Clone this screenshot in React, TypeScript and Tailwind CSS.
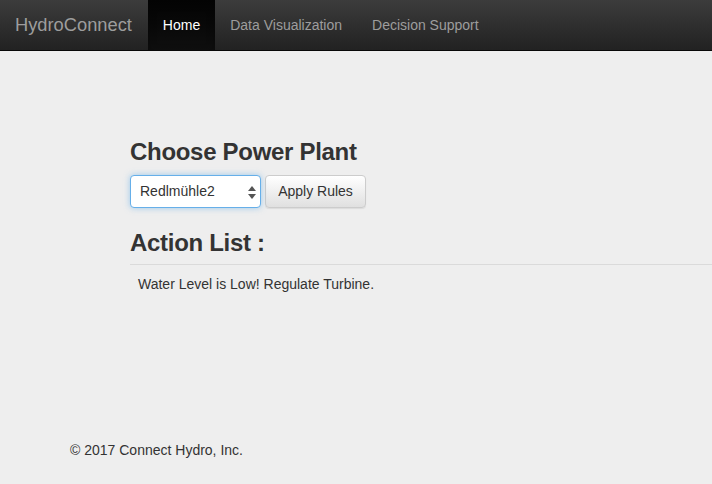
import React from 'react';

const NavLink: React.FC<{ label: string; active?: boolean }> = ({ label, active }) => (
  <a
    className={
      active
        ? 'flex items-center h-full px-[15px] text-white bg-gradient-to-b from-[#040404] to-[#0f0f0f] shadow-[inset_0_3px_9px_rgba(0,0,0,0.25)]'
        : 'flex items-center h-full px-[15px] text-[#9d9d9d]'
    }
  >
    {label}
  </a>
);

export default function App() {
  return (
    <div className="min-h-[484px] bg-[#eeeeee] text-[#333] font-['Liberation_Sans',Arial,sans-serif] text-[14px] flex flex-col">
      <nav className="h-[51px] flex items-stretch bg-gradient-to-b from-[#3c3c3c] to-[#222222] border-b border-[#080808]">
        <div className="flex items-center pl-[15px] pr-[16px] text-[18.3px] text-[#9d9d9d]">HydroConnect</div>
        <NavLink label="Home" active />
        <NavLink label="Data Visualization" />
        <NavLink label="Decision Support" />
      </nav>

      <main className="pl-[130px] pt-[88px] flex-1">
        <h3 className="text-[24px] font-bold leading-[26px] tracking-[-0.3px]">Choose Power Plant</h3>
        <div className="mt-[10px] flex gap-[4px]">
          <div className="relative w-[131px] h-[33px] bg-white border border-[#66afe9] rounded-[4px] shadow-[0_0_6px_rgba(102,175,233,0.6)] flex items-center pl-[9px] text-[14px]">
            Redlmühle2
            <svg className="absolute right-[4px] top-[10px]" width="8" height="13" viewBox="0 0 8 13">
              <path d="M4 0 L8 5 L0 5 Z" fill="#555" />
              <path d="M4 13 L8 8 L0 8 Z" fill="#555" />
            </svg>
          </div>
          <button className="w-[101px] h-[33px] rounded-[4px] border border-[#cccccc] bg-gradient-to-b from-white to-[#e0e0e0] text-[14px] text-[#333] shadow-[0_1px_1px_rgba(0,0,0,0.08)]">
            Apply Rules
          </button>
        </div>
        <h3 className="mt-[22px] text-[24px] font-bold leading-[26px] tracking-[-0.3px]">Action List :</h3>
        <hr className="mt-[8px] border-0 border-t border-[#dadada]" />
        <p className="mt-[9px] pl-[8px]">Water Level is Low! Regulate Turbine.</p>
      </main>

      <footer className="pl-[70px] pb-[23px]">© 2017 Connect Hydro, Inc.</footer>
    </div>
  );
}
